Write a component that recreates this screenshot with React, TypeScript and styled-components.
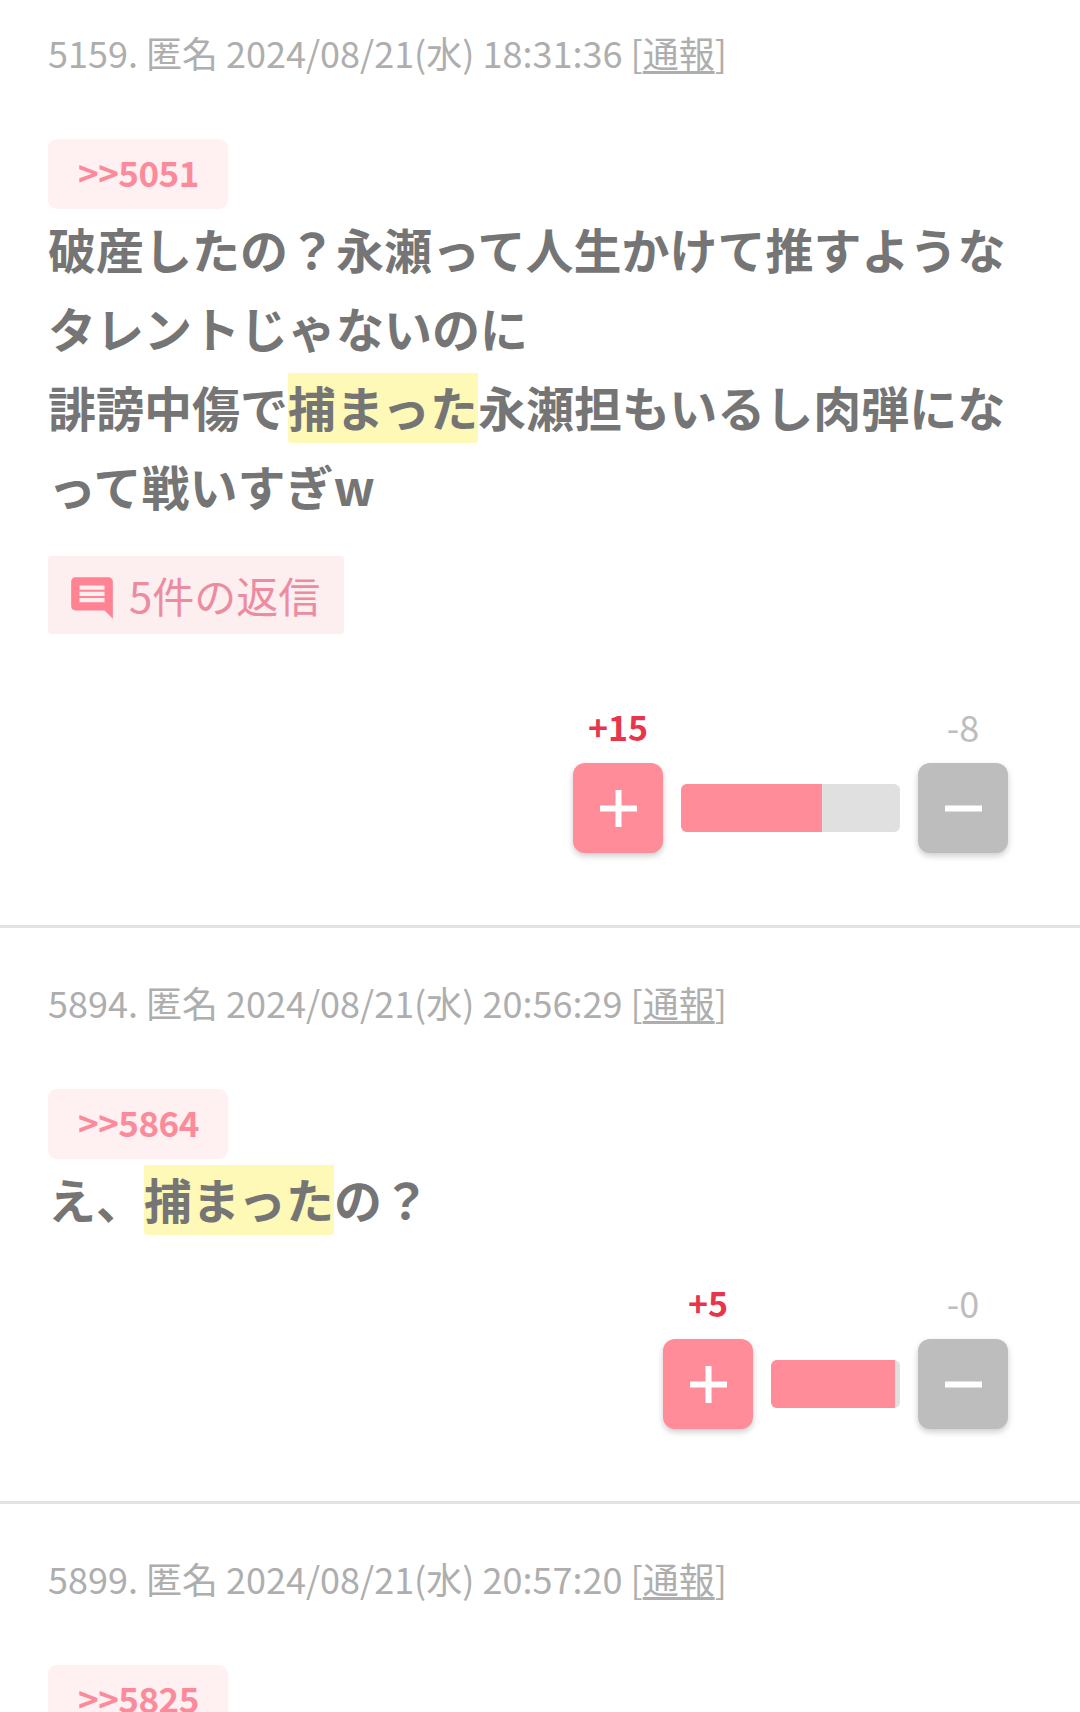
import React from 'react';
import styled, { createGlobalStyle } from 'styled-components';

const GlobalStyle = createGlobalStyle`
  html, body {
    margin: 0;
    padding: 0;
    height: 1712px;
    overflow: hidden;
    background: #ffffff;
  }
  body {
    font-family: "Noto Sans CJK JP", "Noto Sans", sans-serif;
  }
`;

const Page = styled.div`
  margin-top: -22px;
`;

const Item = styled.article`
  padding: 47px 72px 72px 48px;
  border-bottom: 3px solid #e2e2e2;
`;

const Meta = styled.div`
  font-size: 36px;
  line-height: 54px;
  font-weight: 400;
  color: #aeaeae;
  margin-bottom: 60px;

  u {
    text-underline-offset: 3px;
  }
`;

const Anchor = styled.a`
  display: block;
  width: fit-content;
  padding: 0 29px 0 30px;
  height: 70px;
  line-height: 66px;
  font-size: 35px;
  font-weight: 700;
  letter-spacing: -0.5px;
  color: #fb8a9b;
  background: #fff0f1;
  border-radius: 9px;
`;

const Body = styled.p`
  margin: 0;
  width: 960px;
  font-size: 48px;
  line-height: 79px;
  font-weight: 700;
  color: #757575;
  line-break: loose;
`;

const Mark = styled.span`
  padding-bottom: 2px;
  background: linear-gradient(#fff9b8, #fff9b8) no-repeat 0 2px;
  border-radius: 3px;
`;

const ReplyButton = styled.button`
  display: flex;
  align-items: center;
  gap: 12px;
  margin-top: 31px;
  height: 78px;
  padding: 0 24px 2px 19px;
  border: 0;
  font-family: inherit;
  font-size: 42px;
  font-weight: 400;
  color: #ec8ca0;
  background: #fdeef0;
  border-radius: 3px;
`;

const ReplyIcon = styled.svg`
  width: 50px;
  height: 50px;
  margin-top: 8px;
  fill: #ff8392;
  transform: scaleX(-1);
`;

const Votes = styled.div<{ $top: number }>`
  display: flex;
  justify-content: flex-end;
  align-items: flex-end;
  gap: 18px;
  margin-top: ${(p) => p.$top}px;
`;

const VoteColumn = styled.div`
  display: flex;
  flex-direction: column;
  align-items: center;
  gap: 14px;
  width: 90px;
`;

const Count = styled.span<{ $plus?: boolean }>`
  font-size: ${(p) => (p.$plus ? 34 : 36)}px;
  line-height: ${(p) => (p.$plus ? 44 : 42)}px;
  margin-bottom: ${(p) => (p.$plus ? 0 : 2)}px;
  font-weight: ${(p) => (p.$plus ? 700 : 400)};
  color: ${(p) => (p.$plus ? '#e8344c' : '#bdbdbd')};
`;

const VoteButton = styled.button<{ $plus?: boolean }>`
  display: flex;
  align-items: center;
  justify-content: center;
  width: 90px;
  height: 90px;
  padding: 0;
  border: 0;
  border-radius: 12px;
  background: ${(p) => (p.$plus ? '#ff8c98' : '#bdbdbd')};
  box-shadow: 0 3px 6px rgba(0, 0, 0, 0.2);
`;

const VoteGlyph = styled.svg`
  width: 37px;
  height: 37px;
  stroke: #ffffff;
  stroke-width: 6px;
  fill: none;
`;

const Bar = styled.div<{ $width: number }>`
  width: ${(p) => p.$width}px;
  height: 48px;
  margin-bottom: 21px;
  border-radius: 6px;
  overflow: hidden;
  background: #e0e0e0;
`;

const BarFill = styled.div`
  height: 100%;
  background: #ff8c98;
`;

const Plus = () => (
  <VoteGlyph viewBox="0 0 37 37">
    <path d="M0 18.5H37M18.5 0V37" />
  </VoteGlyph>
);

const Minus = () => (
  <VoteGlyph viewBox="0 0 37 37">
    <path d="M0 18.5H37" />
  </VoteGlyph>
);

type VoteProps = {
  plus: number;
  minus: number;
  barWidth: number;
  fill: number;
  top: number;
};

const VoteRow = ({ plus, minus, barWidth, fill, top }: VoteProps) => (
  <Votes $top={top}>
    <VoteColumn>
      <Count $plus>+{plus}</Count>
      <VoteButton $plus>
        <Plus />
      </VoteButton>
    </VoteColumn>
    <Bar $width={barWidth}>
      <BarFill style={{ width: `${fill}%` }} />
    </Bar>
    <VoteColumn>
      <Count>-{minus}</Count>
      <VoteButton>
        <Minus />
      </VoteButton>
    </VoteColumn>
  </Votes>
);

const Header = ({ no, time }: { no: number; time: string }) => (
  <Meta>
    {no}. 匿名 2024/08/21(水) {time} [<u>通報</u>]
  </Meta>
);

export default function App() {
  return (
    <Page>
      <GlobalStyle />
      <Item>
        <Header no={5159} time="18:31:36" />
        <Anchor>&gt;&gt;5051</Anchor>
        <Body>
          破産したの？永瀬って人生かけて推すようなタレントじゃないのに
          <br />
          誹謗中傷で<Mark>捕まった</Mark>永瀬担もいるし肉弾になって戦いすぎw
        </Body>
        <ReplyButton>
          <ReplyIcon viewBox="0 0 24 24">
            <path d="M20 2H4c-1.1 0-1.99.9-1.99 2L2 22l4-4h14c1.1 0 2-.9 2-2V4c0-1.1-.9-2-2-2zm-2 12H6v-2h12v2zm0-3H6V9h12v2zm0-3H6V6h12v2z" />
          </ReplyIcon>
          5件の返信
        </ReplyButton>
        <VoteRow plus={15} minus={8} barWidth={219} fill={64.4} top={71} />
      </Item>
      <Item>
        <Header no={5894} time="20:56:29" />
        <Anchor>&gt;&gt;5864</Anchor>
        <Body>
          え、<Mark>捕まった</Mark>の？
        </Body>
        <VoteRow plus={5} minus={0} barWidth={129} fill={96} top={43} />
      </Item>
      <Item>
        <Header no={5899} time="20:57:20" />
        <Anchor>&gt;&gt;5825</Anchor>
      </Item>
    </Page>
  );
}
